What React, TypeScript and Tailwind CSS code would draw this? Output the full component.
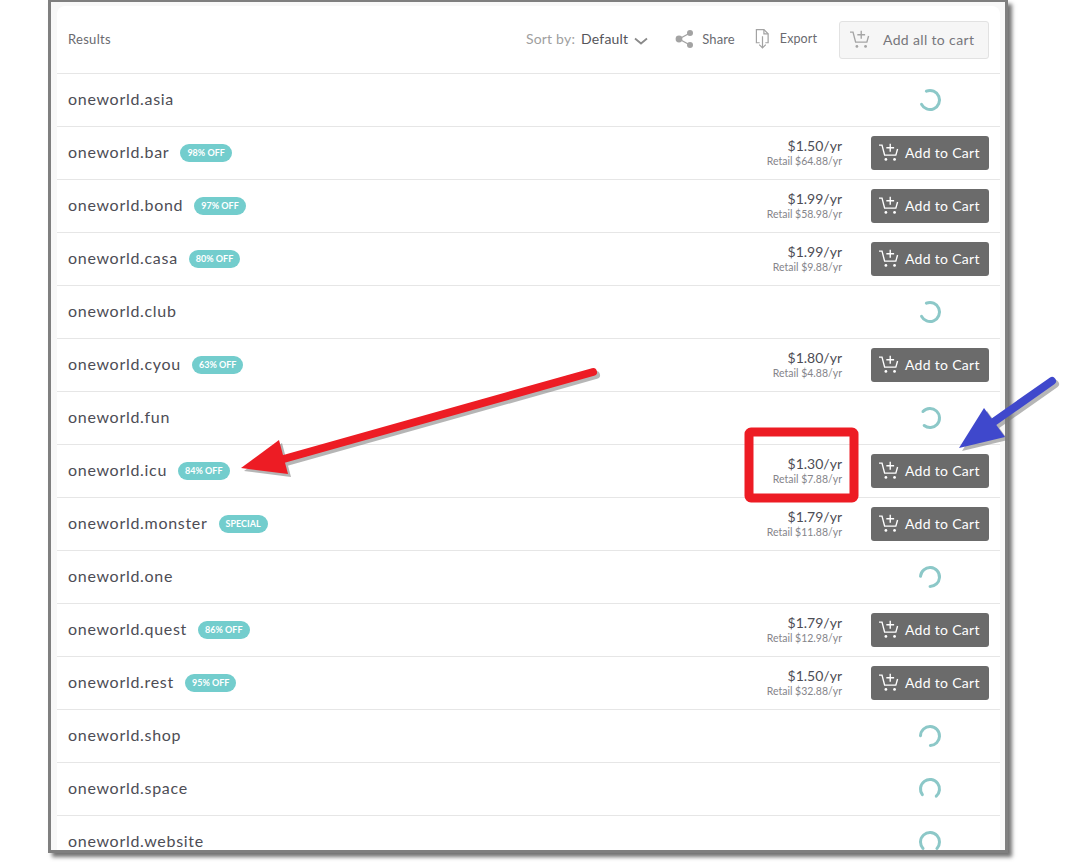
const FONT = "font-['Lato','Open_Sans',sans-serif]";

type Row = {
  name: string;
  badge?: string;
  price?: string;
  retail?: string;
  gap?: number;
};

const ROWS: Row[] = [
  { name: "oneworld.asia", gap: 290 },
  { name: "oneworld.bar", badge: "98% OFF", price: "$1.50/yr", retail: "Retail $64.88/yr" },
  { name: "oneworld.bond", badge: "97% OFF", price: "$1.99/yr", retail: "Retail $58.98/yr" },
  { name: "oneworld.casa", badge: "80% OFF", price: "$1.99/yr", retail: "Retail $9.88/yr" },
  { name: "oneworld.club", gap: 290 },
  { name: "oneworld.cyou", badge: "63% OFF", price: "$1.80/yr", retail: "Retail $4.88/yr" },
  { name: "oneworld.fun", gap: 265 },
  { name: "oneworld.icu", badge: "84% OFF", price: "$1.30/yr", retail: "Retail $7.88/yr" },
  { name: "oneworld.monster", badge: "SPECIAL", price: "$1.79/yr", retail: "Retail $11.88/yr" },
  { name: "oneworld.one", gap: 227 },
  { name: "oneworld.quest", badge: "86% OFF", price: "$1.79/yr", retail: "Retail $12.98/yr" },
  { name: "oneworld.rest", badge: "95% OFF", price: "$1.50/yr", retail: "Retail $32.88/yr" },
  { name: "oneworld.shop", gap: 225 },
  { name: "oneworld.space", gap: 186 },
  { name: "oneworld.website", gap: 180 },
];

function CartIcon({ className }: { className?: string }) {
  return (
    <svg viewBox="0 0 24 22" fill="none" stroke="currentColor" strokeWidth="1.6" className={className}>
      <path d="M1 2.5h3.5l3 11.5h13l2-7" />
      <path d="M14 1v9M9.5 5.5h9" />
      <circle cx="9" cy="19" r="1.6" fill="currentColor" stroke="none" />
      <circle cx="19" cy="19" r="1.6" fill="currentColor" stroke="none" />
    </svg>
  );
}

function Spinner({ gap }: { gap: number }) {
  // gap is the middle of the open part, in degrees clockwise from the top
  return (
    <svg viewBox="0 0 24 24" className="mb-[1px] h-6 w-6">
      <circle
        cx="12"
        cy="12"
        r="9.5"
        fill="none"
        stroke="#8cc8c8"
        strokeWidth="3"
        strokeLinecap="round"
        pathLength="360"
        strokeDasharray="265 95"
        transform={`rotate(${gap + 47.5 - 90} 12 12)`}
      />
    </svg>
  );
}

function ResultRow({ row }: { row: Row }) {
  return (
    <div className="flex h-[53px] shrink-0 items-center border-b border-[#e6e6e6] pl-[11px] pr-[11px]">
      <span className="mb-[2px] text-[16px] tracking-[0.7px] text-[#4d4d55]">{row.name}</span>
      {row.badge && (
        <span className="ml-[11px] flex h-[18px] items-center rounded-full bg-[#73cdcd] px-[7px] text-[9px] font-bold text-white">
          {row.badge}
        </span>
      )}
      <div className="ml-auto flex items-center">
        {row.price ? (
          <>
            <div className="mr-[29px] text-right">
              <div className="text-[14px] leading-[15px] text-[#4d4d55]">{row.price}</div>
              <div className="mt-[1px] text-[10.5px] leading-[14px] text-[#85858a]">{row.retail}</div>
            </div>
            <button className="flex h-[34px] w-[118px] items-center gap-[6px] rounded-[3px] bg-[#6b6b6b] pb-[1px] pl-[7px] text-[14px] tracking-[0.3px] text-white">
              <CartIcon className="h-[19px] w-[21px]" />
              Add to Cart
            </button>
          </>
        ) : (
          <div className="flex w-[118px] justify-center">
            <Spinner gap={row.gap ?? 0} />
          </div>
        )}
      </div>
    </div>
  );
}

export default function App() {
  return (
    <div className={`relative h-[862px] w-[1081px] overflow-hidden bg-white ${FONT}`}>
      <div className="ml-[48px] h-[853px] w-[960px] overflow-hidden border-[3px] border-t-[2px] border-[#7f7f7f] bg-[#f8f8f8] pl-[6px] pr-[5px] pt-[4px] shadow-[4px_4px_4px_rgba(80,80,80,0.8)]">
        <div className="h-full overflow-hidden rounded-t-[8px] bg-white">
          <div className="flex h-[68px] items-center border-b border-[#e6e6e6] pl-[11px] pr-[11px]">
            <span className="text-[13px] tracking-[0.3px] text-[#6a6a6f]">Results</span>
            <div className="ml-auto flex items-center">
              <span className="mb-[2px] text-[14px] tracking-[0.2px] text-[#a0a0a0]">Sort by:</span>
              <span className="mb-[2px] ml-[6px] text-[14px] tracking-[0.2px] text-[#55555a]">Default</span>
              <svg viewBox="0 0 14 8" fill="none" stroke="#8a8a8a" strokeWidth="1.8" className="ml-[6px] mt-[3px] h-[8px] w-[14px]">
                <path d="M1 1.5l6 5 6-5" />
              </svg>
              <svg viewBox="0 0 19 20" className="mb-[2px] ml-[27px] h-[20px] w-[19px]" fill="#a3a3a3" stroke="#a3a3a3">
                <path d="M15 4L4 10l11 6" fill="none" strokeWidth="1.3" />
                <circle cx="15" cy="4" r="3" stroke="none" />
                <circle cx="4" cy="10" r="3.4" stroke="none" />
                <circle cx="15" cy="16" r="3" stroke="none" />
              </svg>
              <span className="ml-[8px] text-[13px] tracking-[0.1px] text-[#6a6a6f]">Share</span>
              <svg viewBox="0 0 16 22" fill="none" stroke="#a3a3a3" strokeWidth="1.3" className="mb-[2px] ml-[20px] h-[22px] w-[15px]">
                <path d="M5 15H1.5V1h8L14 5.5V15h-3" />
                <path d="M9.5 1v4.5H14" />
                <path d="M8 8v12M4.5 17L8 20.5l3.5-3.5" />
              </svg>
              <span className="ml-[10px] text-[12.5px] tracking-[0.1px] text-[#6a6a6f]">Export</span>
              <button className="ml-[22px] flex h-[38px] w-[150px] items-center gap-[13px] rounded-[3px] border border-[#e2e2e2] bg-[#f6f6f6] pl-[9px] text-[14px] tracking-[0.35px] text-[#77777c]">
                <CartIcon className="h-[19px] w-[21px] text-[#a5a5a5]" />
                Add all to cart
              </button>
            </div>
          </div>
          {ROWS.map((row) => (
            <ResultRow key={row.name} row={row} />
          ))}
        </div>
      </div>

      {/* annotations drawn over the screenshot */}
      <svg viewBox="0 0 1081 862" className="pointer-events-none absolute left-0 top-0 h-[862px] w-[1081px]">
        <g fill="#7a7a7a" stroke="#7a7a7a" opacity="0.55" transform="translate(3 3)">
          <path d="M593 372L280 460" strokeWidth="8" strokeLinecap="round" fill="none" />
          <path d="M241 468L279 440L288 474Z" stroke="none" />
          <path d="M1052 381L985 428" strokeWidth="8" strokeLinecap="round" fill="none" />
          <path d="M959 448L984 408L1005 437Z" stroke="none" />
        </g>
        <path d="M593 372L280 460" stroke="#ed1c24" strokeWidth="8" strokeLinecap="round" fill="none" />
        <path d="M241 468L279 440L288 474Z" fill="#ed1c24" />
        <path d="M1052 381L985 428" stroke="#3f48cc" strokeWidth="8" strokeLinecap="round" fill="none" />
        <path d="M959 448L984 408L1005 437Z" fill="#3f48cc" />
        <rect x="749" y="432" width="105" height="66" rx="2" fill="none" stroke="#ed1c24" strokeWidth="9" />
      </svg>
    </div>
  );
}
